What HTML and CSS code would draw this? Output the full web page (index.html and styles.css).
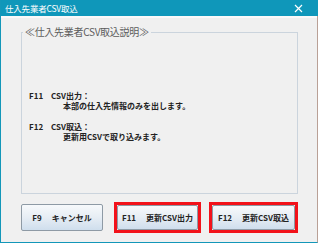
FILE: index.html
```html
<!DOCTYPE html>
<html lang="ja">
<head>
<meta charset="utf-8">
<link rel="stylesheet" href="styles.css">
</head>
<body>
<div class="window">
  <div class="titlebar">
    <span class="title">仕入先業者CSV取込</span>
    <svg class="close" width="9" height="9" viewBox="0 0 9 9"><path d="M1 1L8 8M8 1L1 8" stroke="#fff" stroke-width="1.2" fill="none"/></svg>
  </div>
  <div class="client">
    <fieldset class="group">
      <legend class="legend">≪仕入先業者CSV取込説明≫</legend>
      <div class="desc">
        <div class="item">
          <span class="key">F11</span>
          <span class="label">CSV出力：</span>
          <span class="note">本部の仕入先情報のみを出します。</span>
        </div>
        <div class="item">
          <span class="key">F12</span>
          <span class="label">CSV取込：</span>
          <span class="note">更新用CSVで取り込みます。</span>
        </div>
      </div>
    </fieldset>
    <div class="buttons">
      <button class="btn btn-cancel"><span class="fk">F9</span>キャンセル</button>
      <div class="mark mark-out"><button class="btn btn-out"><span class="fk">F11</span>更新CSV出力</button></div>
      <div class="mark mark-in"><button class="btn btn-in"><span class="fk">F12</span>更新CSV取込</button></div>
    </div>
  </div>
</div>
</body>
</html>
```
FILE: styles.css
```css
* { box-sizing: border-box; }
html, body { margin: 0; padding: 0; background: #ffffff; }
body {
  font-family: "Noto Sans CJK JP", "Noto Sans", sans-serif;
  width: 320px; height: 244px; overflow: hidden;
}
.window {
  width: 318px; height: 243px;
  background: #f0f0f0;
  border-left: 1px solid #1397b9;
  border-right: 1px solid #b9a096;
  border-bottom: 1px solid #1397b9;
  display: flex; flex-direction: column;
}
.titlebar {
  height: 16px; flex: none;
  background: #0f97ba;
  margin-right: -1px;
  display: flex; align-items: center; justify-content: space-between;
  padding: 0 15px 0 4px;
  color: #fff;
}
.title { font-size: 8.5px; line-height: 16px; letter-spacing: -0.2px; }
.close { display: block; }
.client {
  flex: 1;
  border-top: 2px solid #f9f9f9;
  padding: 8px 19px 0 20px;
  display: flex; flex-direction: column;
}
.group {
  margin: 0; padding: 0;
  height: 168px;
  border: 1px solid #cbd4dd;
  min-width: 0;
}
.legend {
  margin-left: 1px;
  padding: 0 2px;
  font-size: 10px; line-height: 12px;
  color: #5c5c5c;
  letter-spacing: -0.3px;
}
.desc { padding: 53px 0 0 7px; }
.item {
  display: grid;
  grid-template-columns: 22px auto;
  font-size: 8px; line-height: 10px; font-weight: bold;
  color: #222;
  margin-bottom: 11px;
}
.note { grid-column: 2; padding-left: 12px; }
.buttons {
  margin-top: 8px;
  height: 31px;
  display: flex; align-items: center;
}
.btn {
  margin: 0; padding: 0;
  height: 27px; width: 82px;
  border: 1px solid #8e9aa5;
  border-radius: 2px;
  background: linear-gradient(#f7f9fb, #e6edf4 50%, #cfdeed);
  font-family: inherit;
  font-size: 8px; font-weight: bold; color: #222;
  display: flex; align-items: center; justify-content: center;
}
.fk { margin-right: 10px; }
.mark { border: 3px solid #f2121a; padding: 0; }
.mark .btn { height: 25px; }
.mark-out { margin-left: 11px; }
.btn-out { width: 81px; }
.mark-in { margin-left: 8px; }
.btn-in { width: 83px; }
```
